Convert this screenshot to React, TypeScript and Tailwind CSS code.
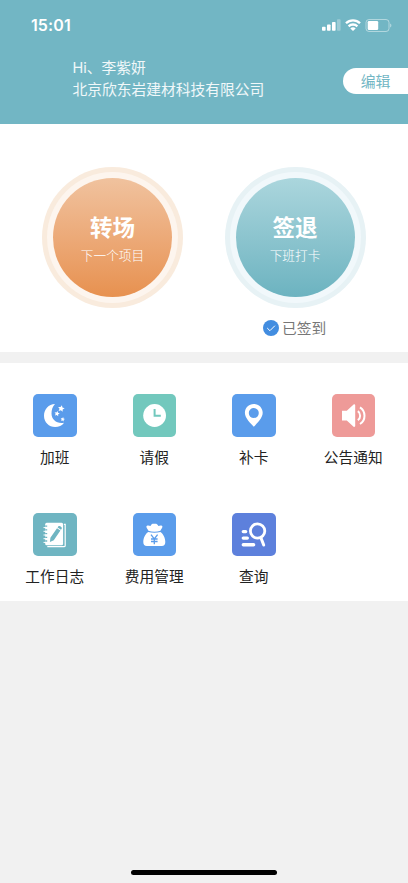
import React from 'react';

type MenuItem = {
  label: string;
  color: string;
  icon: React.ReactNode;
};

const star = (cx: number, cy: number, r: number) =>
  Array.from({ length: 10 }, (_, i) => {
    const radius = i % 2 ? r * 0.48 : r;
    const angle = (i * Math.PI) / 5 - Math.PI / 2 + 0.2;
    return `${(cx + radius * Math.cos(angle)).toFixed(2)},${(cy + radius * Math.sin(angle)).toFixed(2)}`;
  }).join(' ');

const menuItems: MenuItem[] = [
  {
    label: '加班',
    color: 'bg-[#5a9ceb]',
    icon: (
      <>
        <path d="M22 10C15.6 10.2 11 15.3 11 21.7 11 28.3 16 33 22.1 33c3.6 0 6.9-1.3 9-4.3C23.9 30 18.7 26 18.500 19.800c-.1-4 1.200-7.300 3.500-9.800z" fill="white" />
        <polygon points={star(28.2, 14.6, 3.5)} fill="white" />
        <polygon points={star(24, 19.7, 2.8)} fill="white" />
        <polygon points={star(29.7, 25.3, 2.3)} fill="white" />
      </>
    ),
  },
  {
    label: '请假',
    color: 'bg-[#72c8bd]',
    icon: (
      <>
        <circle cx="21.6" cy="21.5" r="11.4" fill="white" />
        <path d="M21.6 15v6.7h6.2" fill="none" stroke="#72c8bd" strokeWidth="2" />
      </>
    ),
  },
  {
    label: '补卡',
    color: 'bg-[#5a9ceb]',
    icon: (
      <path
        d="M21.8 10c-5 0-8.9 3.9-8.9 8.8 0 5.2 5.6 10.5 8.9 14 3.3-3.5 8.9-8.8 8.9-14 0-4.9-3.9-8.8-8.9-8.8zm0 4.1a5 5 0 110 10 5 5 0 010-10z"
        fill="white"
        fillRule="evenodd"
      />
    ),
  },
  {
    label: '公告通知',
    color: 'bg-[#ee9a98]',
    icon: (
      <>
        <path d="M10 16.8h4.8l6.8-6.3c.6-.5 1.6-.2 1.6.6v21c0 .8-1 1.100-1.600.6l-6.800-6.100H10z" fill="white" />
        <path d="M25.8 17.2c3.1 1.9 3.1 7 0 8.9M28 13.3c6 3.8 6 12.900 0 16.700" fill="none" stroke="white" strokeWidth="2" />
      </>
    ),
  },
  {
    label: '工作日志',
    color: 'bg-[#6fb5c2]',
    icon: (
      <>
        <path d="M31 11.4h1.2v21c0 .8-.6 1.3-1.3 1.3H14.3" fill="none" stroke="white" strokeWidth="1.2" />
        <rect x="12.2" y="9.8" width="17.9" height="22.5" rx="1.5" fill="white" />
        <path d="M12.2 13.2h2M12.2 16.9h2M12.2 20.6h2M12.2 24.3h2M12.2 28h2" stroke="#6fb5c2" strokeWidth="1.3" />
        <path d="M10.5 14.6h3M10.5 18.3h3M10.5 22h3M10.5 25.7h3M10.5 29.4h3" stroke="white" strokeWidth="1" />
        <path d="M24 15.3l3.4 2.3-6.6 9.6-3.9 1.9.5-4.3zM24.6 14.4l.8-1.1c.9-1.1 4.1 1 3.4 2.3l-.8 1.1z" fill="#6fb5c2" />
      </>
    ),
  },
  {
    label: '费用管理',
    color: 'bg-[#5a9ceb]',
    icon: (
      <>
        <path d="M15.4 17.7c-.7-1.7-2.1-2.9-2-4.2.3-1.3 2.6-1.1 4.1-.4.9-3 2.700-2.400 3.800-2.400s3-.6 4.100 2.400c1.500-.7 3.700-.9 4 .4.1 1.300-1.300 2.500-2 4.200-3.500 1.300-8.500 1.300-12 0z" fill="white" />
        <path d="M15.2 19c3.700 1 8.500 1 12.200 0 2.900 1.800 4.900 6 4.900 10 0 2.700-1.200 4-3.500 4H13.800c-2.300 0-3.500-1.300-3.500-4 0-4 2-8.200 4.900-10z" fill="white" />
        <path d="M18 21.600l3.300 4.300 3.300-4.300M21.300 25.900v5.400M18 26h6.600M18 28.500h6.600" fill="none" stroke="#5a9ceb" strokeWidth="1.3" />
      </>
    ),
  },
  {
    label: '查询',
    color: 'bg-[#5d80dc]',
    icon: (
      <g fill="none" stroke="white" strokeWidth="3.4" strokeLinecap="round">
        <circle cx="25.6" cy="18" r="7.2" strokeWidth="2.8" />
        <path d="M29.2 25.5l2.5 6.5" strokeWidth="3" />
        <path d="M11.3 18.6h2.4M11.3 25.1h4M11.3 31.7h10.3" />
      </g>
    ),
  },
];

function StatusBar() {
  return (
    <div className="flex h-[50px] items-center justify-between pl-[31px] pr-[16px]">
      <span className="font-[Inter] text-[16px] font-semibold tracking-[0.1px]">15:01</span>
      <div className="flex items-center gap-1">
        <svg width="19" height="12" viewBox="0 0 19 12" fill="white">
          <rect x="0" y="7.8" width="3.6" height="4" rx="0.8" />
          <rect x="5" y="5.5" width="3.6" height="6.3" rx="0.8" />
          <rect x="10" y="3" width="3.6" height="8.8" rx="0.8" />
          <rect x="15" y="0.3" width="3.6" height="11.5" rx="0.8" opacity="0.3" />
        </svg>
        <svg width="16" height="12" viewBox="0 0 16 12" fill="none" stroke="white" strokeWidth="2.3">
          <path d="M1 4.3c3.9-3.9 10.1-3.9 14 0M3.6 7.3c2.5-2.4 6.3-2.4 8.800 0" />
          <path d="M8 12L5.300 9.400c1.500-1.400 3.900-1.400 5.400 0z" fill="white" stroke="none" />
        </svg>
        <svg width="27" height="13" viewBox="0 0 27 13">
          <rect x="1" y="0.5" width="23" height="12" rx="3" fill="none" stroke="white" strokeOpacity="0.45" />
          <rect x="2.7" y="2" width="10.5" height="9" rx="1.3" fill="white" />
          <path d="M25.2 4.500c1.600.5 1.600 3.500 0 4z" fill="white" opacity="0.5" />
        </svg>
      </div>
    </div>
  );
}

type PunchButtonProps = {
  title: string;
  subtitle: string;
  ring: string;
  halo: string;
  fill: string;
};

function PunchButton({ title, subtitle, ring, halo, fill }: PunchButtonProps) {
  return (
    <button className={`flex size-[141px] items-center justify-center rounded-full ${ring}`}>
      <span className={`flex size-[131px] items-center justify-center rounded-full ${halo}`}>
        <span className={`flex size-[119px] flex-col items-center rounded-full bg-linear-to-b pt-[32px] text-white ${fill}`}>
          <span className="text-[22.5px] leading-[33px] font-bold">{title}</span>
          <span className="mt-[2px] text-[12.7px] leading-[20px] font-light">{subtitle}</span>
        </span>
      </span>
    </button>
  );
}

export default function App() {
  return (
    <div className="flex h-[883px] w-[408px] flex-col overflow-hidden bg-[#f1f1f1] font-['Noto_Sans_CJK_SC',sans-serif]">
      <header className="h-[124px] shrink-0 bg-[#72b6c4] text-white">
        <StatusBar />
        <div className="flex justify-between pt-[6px] pl-[72.5px]">
          <div className="text-[14.75px] leading-[21px] whitespace-nowrap text-white/90">
            <p><span className="font-[Inter] text-[14.5px]">Hi</span>、李紫妍</p>
            <p>北京欣东岩建材科技有限公司</p>
          </div>
          <button className="mt-[12px] h-[26px] w-[65px] rounded-l-full bg-white text-[14.8px] leading-[26px] text-[#72b6c4]">
            编辑
          </button>
        </div>
      </header>

      <section className="h-[228px] shrink-0 bg-white pt-[43px] pl-[42px]">
        <div className="flex gap-[41.5px]">
          <PunchButton title="转场" subtitle="下一个项目" ring="bg-[#f9ebdd]" halo="bg-[#fdf5ee]" fill="from-[#f0c29e] to-[#e7914f]" />
          <PunchButton title="签退" subtitle="下班打卡" ring="bg-[#e7f2f5]" halo="bg-[#f1f8fb]" fill="from-[#abd6dd] to-[#6cb3c0]" />
        </div>
        <div className="mt-[9px] ml-[221px] flex items-center gap-[3px]">
          <svg width="16" height="16" viewBox="0 0 16 16" fill="none">
            <circle cx="8" cy="8" r="8" fill="#428de0" />
            <path d="M4.2 8l2.7 2.7 5-5" stroke="white" strokeWidth="1" />
          </svg>
          <span className="text-[14.7px] leading-[22px] text-[#777]">已签到</span>
        </div>
      </section>

      <section className="mt-[11px] grid h-[238px] shrink-0 grid-cols-4 grid-rows-[119px_119px] bg-white px-[5px]">
        {menuItems.map((item) => (
          <div key={item.label} className="flex flex-col items-center pt-[31px]">
            <div className={`h-[43px] w-[43.5px] rounded-[5px] ${item.color}`}>
              <svg width="44" height="44" viewBox="0 0 44 44">{item.icon}</svg>
            </div>
            <span className="mt-[9px] text-[14.7px] leading-[22px] text-[#222]">{item.label}</span>
          </div>
        ))}
      </section>

      <div className="mt-auto mb-[8px] h-[5px] w-[146px] self-center rounded-full bg-black" />
    </div>
  );
}
